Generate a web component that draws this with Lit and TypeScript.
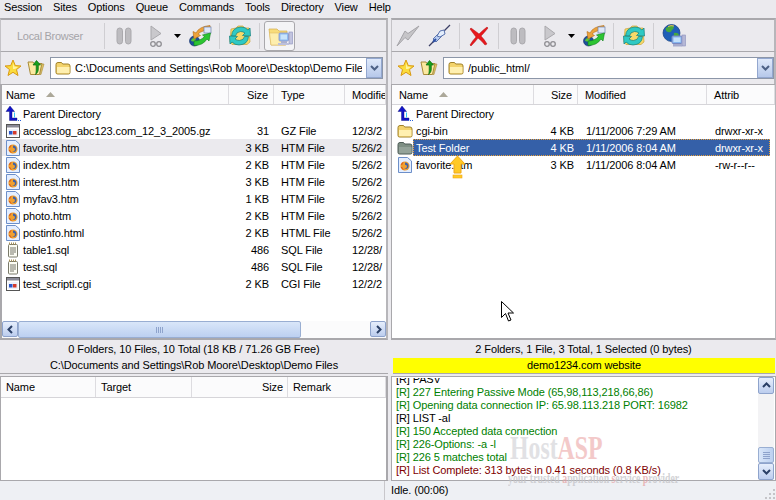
import { LitElement, html, css } from "lit";
import { customElement } from "lit/decorators.js";

const star = () => html`<svg class="ic" width="18" height="18" viewBox="0 0 18 18"><polygon points="9,1 11.3,6.6 17,7 12.5,10.6 14,16.5 9,13.3 4,16.5 5.5,10.6 1,7 6.7,6.6" fill="#fbdc3c" stroke="#d99a12" stroke-width="1"/><polygon points="9,4 10.3,7.6 14,8 11,10 9,10" fill="#fff3a0"/></svg>`;
const folderUp = () => html`<svg class="ic" width="18" height="18" viewBox="0 0 18 18"><path d="M1 3h5l1 1.5h8l-2.500 11H3.500z" fill="#fbe9a0" stroke="#a88b3a"/><path d="M15 5h2l-3 10.500h-1z" fill="#e4c766" stroke="#a88b3a" stroke-width=".6"/><path d="M9.500 1.500l4 4.500h-2.200v4c0 2.500-1 4-2.800 5.500.6-1.500.7-3 .7-5.500V6H6z" fill="#17a11d" stroke="#0b6a10" stroke-width=".7"/></svg>`;
const folder = (grey = false) => html`<svg class="ic" width="16" height="16" viewBox="0 0 16 16"><path d="M1 4.500Q1 2.500 3 2.500h3.500l1.200 1.500H13q2 0 2 2v6.500q0 1.500-1.500 1.500h-11Q1 14 1 12.500z" fill="${grey ? "#7e8f84" : "#f3d36c"}" stroke="${grey ? "#4f5d58" : "#a0812a"}"/><path d="M2 7h12.500v5.500q0 .8-.8.800H2.800q-.8 0-.8-.8z" fill="${grey ? "#94a39a" : "#fff0b0"}"/></svg>`;
const htmIcon = () => html`<svg class="ic" width="16" height="16" viewBox="0 0 16 16"><path d="M1.500.5h9l4 3.500v11.500h-13z" fill="#e4eeff" stroke="#6d8fc9"/><circle cx="8" cy="9" r="4.600" fill="#f0a030"/><path d="M8 5.500a3.500 3.500 0 0 1 3.500 3.500q0 1.500-1.200 2.500-1.500 1-3 .3 2.500 0 2.700-2.300 0-1.500-2-1.800z" fill="#3f62a8"/><path d="M3.700 8Q4.500 5 7 4.700 5.500 6 5.500 7.500z" fill="#d9541a"/><path d="M3.700 10Q5 13 8 13.400 5.500 12 5 10z" fill="#d9541a"/></svg>`;
const winIcon = () => html`<svg class="ic" width="16" height="16" viewBox="0 0 16 16"><rect x="1.500" y="1.500" width="13" height="13" fill="#fff" stroke="#555"/><rect x="2" y="2" width="12" height="2.500" fill="#8a8a96"/><rect x="3" y="6" width="10" height="7" fill="#eef2fb"/><rect x="4" y="8" width="3.500" height="3.500" fill="#2b57c9"/><rect x="8" y="8" width="3.500" height="3.500" fill="#d43a2c"/></svg>`;
const sqlIcon = () => html`<svg class="ic" width="16" height="16" viewBox="0 0 16 16"><rect x="3.500" y="2.500" width="9" height="12.500" rx="1" fill="#fdfdf4" stroke="#7a7a6a"/><path d="M4 1.500h8" stroke="#a8925a" stroke-width="2" stroke-dasharray="1 1"/><path d="M5 6h6M5 8h6M5 10h6M5 12h4" stroke="#77776a"/></svg>`;
const parentIcon = () => html`<svg class="ic parent" width="17" height="16" viewBox="0 0 17 16"><path d="M5 0l4.500 5.500H7V12h5v2.500H4.500V5.500H1z" fill="#1214c8" stroke="#060870" stroke-width=".4"/><path d="M9.500 6.500v5" stroke="#36c7f2" stroke-width="1"/><path d="M11 14.500h1M13 14.500h1M15 14.500h1" stroke="#2a62d8"/></svg>`;
const caret = () => html`<svg class="caret" width="7" height="4" viewBox="0 0 7 4"><path d="M0 0h7L3.500 4z" fill="#000"/></svg>`;
const pause = () => html`<svg class="ic" width="16" height="18" viewBox="0 0 16 18"><rect x="1" y="1" width="5.500" height="16" rx="2.700" fill="#bdbcc0" stroke="#aaa9ad"/><rect x="9.500" y="1" width="5.500" height="16" rx="2.700" fill="#bdbcc0" stroke="#aaa9ad"/></svg>`;
const go = () => html`<svg class="ic" width="14" height="22" viewBox="0 0 14 22"><path d="M2 1l10 7.500L2 15z" fill="#c9c8cc" stroke="#a9a8ac"/><g fill="none" stroke="#8f8e93" stroke-width="1.300"><circle cx="4" cy="19" r="2.300"/><circle cx="10" cy="19" r="2.300"/></g></svg>`;
const sync = () => html`<svg class="ic" width="25" height="24" viewBox="0 0 25 24"><circle cx="6.500" cy="17" r="5" fill="#1c4f9a" stroke="#0f2c66" stroke-width=".6"/><path d="M3 17a3.500 3.500 0 0 1 5-3l-1 4z" fill="#5cc13c"/><path d="M22 1.500Q11 2.500 8 9L5 7.500l1 7.500 6.500-3.500-2.500-1.500Q14 6 22.500 6z" fill="#eda23a" stroke="#b66c13" stroke-width=".6"/><rect x="16" y="3" width="7" height="6" fill="#dfe7f7" stroke="#6d83ad" stroke-width=".7"/><path d="M6 21.500Q15 21.500 19 15l2 2 1.500-8L14.500 11l2 1.500Q12.500 17 6 17z" fill="#2cc432" stroke="#0e7f1a" stroke-width=".6"/></svg>`;
const refresh = () => html`<svg class="ic" width="24" height="24" viewBox="0 0 24 24"><path d="M3 5l5-1 2-2h5l1.500 2H21l1 14-3 2.500H4L2 18z" fill="#f7d969" stroke="#c9a33b" stroke-width=".7"/><path d="M3.500 12Q4 3.500 13 3q4.500 0 7 3l2-2 .5 8-8-.5 2.500-2.500Q15 7.500 12.500 7.500 8 8 7.500 12z" fill="#2ec9c4" stroke="#12807c" stroke-width=".7"/><path d="M20.500 12.500Q20 20.500 11 21q-4.500 0-7-3l-2 2-.5-8 8 .5L7 15q2 1.500 4.500 1.500 4.500-.5 5-4z" fill="#2ec9c4" stroke="#12807c" stroke-width=".7"/></svg>`;
const monitorFolder = () => html`<svg class="ic" width="26" height="24" viewBox="0 0 26 24"><path d="M2 5h8l2 2h8l-1 14H4z" fill="#f8dc7a" stroke="#d3ae52" stroke-width=".7"/><path d="M2.500 9h17l-1 12H4z" fill="#fdeeae" stroke="#e0be66" stroke-width=".6"/><rect x="12" y="9" width="9.500" height="8" rx="1" fill="#8fbdf1" stroke="#8a94c6" stroke-width=".8"/><rect x="13.500" y="10.500" width="6.500" height="5" fill="#c9e4fb"/><rect x="14" y="17" width="6" height="2" fill="#aab0d0"/><rect x="22" y="8" width="3.500" height="12" fill="#c2c4df" stroke="#8a8fbd" stroke-width=".6"/><rect x="11" y="19" width="11" height="2" fill="#bcc0dc"/></svg>`;
const lightning = () => html`<svg class="ic" width="24" height="22" viewBox="0 0 24 22"><path d="M23 1L12 8.500 9 6 1 21 9 12.500 12 15z" fill="#c6c5c8" stroke="#a5a4a8"/></svg>`;
const plug = () => html`<svg class="ic" width="23" height="23" viewBox="0 0 23 23"><path d="M1 22l6-6M16 7l6-6" stroke="#3b3f66" stroke-width="1.300"/><path d="M5 15l7-7 3 3-7 7z" fill="#b9cdf1" stroke="#5a73ad"/><path d="M9 12l3-5 4-1 1 4-5 3z" fill="#e4eefc" stroke="#5a73ad"/><path d="M5 18l3-3" stroke="#2c4ea3" stroke-width="2"/></svg>`;
const redX = () => html`<svg class="ic" width="20" height="20" viewBox="0 0 20 20"><path d="M2 2q7 5 8 6 4-4 8-7l1 1q-4 5-7 8 3 3 6 8l-2 1q-3-4-7-7-3 4-7 8l-1-1q3-5 6-8Q4 7 1 3z" fill="#e8181c" stroke="#b01015" stroke-width=".5"/></svg>`;
const globe = () => html`<svg class="ic" width="24" height="24" viewBox="0 0 24 24"><circle cx="9.500" cy="9" r="8.500" fill="#1e5fb8" stroke="#123d80" stroke-width=".7"/><path d="M4 4q4-3 7-2 2 2-1 4-1 3-4 2-3-1-2-4zM12 9q4-1 5 2-2 4-4 3-2-2-1-5z" fill="#45a83e"/><path d="M6 2.500Q9 1 12 2" stroke="#e8c84a" fill="none"/><rect x="10" y="12" width="10" height="7.500" rx="1" fill="#85b4ef" stroke="#7a88c0"/><rect x="11.500" y="13.500" width="7" height="4.500" fill="#c3e0fa"/><rect x="20" y="11" width="3.500" height="11" fill="#b5b7d6" stroke="#8a8fbd" stroke-width=".6"/><rect x="11" y="20" width="9" height="2.500" fill="#a6aacb"/></svg>`;
const comboArrow = () => html`<svg width="9" height="6" viewBox="0 0 9 6"><path d="M1 1l3.500 3.500L8 1" fill="none" stroke="#4d6185" stroke-width="2"/></svg>`;
const chev = (d: string) => html`<svg width="9" height="9" viewBox="0 0 9 9"><path d="${d}" fill="none" stroke="#2a3f66" stroke-width="2"/></svg>`;
const sortTri = () => html`<svg class="tri" width="9" height="5" viewBox="0 0 9 5"><path d="M4.500 0L9 5H0z" fill="#aca899"/></svg>`;
const gripper = () => html`<svg class="gripper" width="12" height="12" viewBox="0 0 12 12"><path d="M9 1h2v2H9zM9 5h2v2H9zM5 5h2v2H5zM9 9h2v2H9zM5 9h2v2H5zM1 9h2v2H1z" fill="#c4c4c8"/></svg>`;

const leftFiles = [
  ["win", "accesslog_abc123.com_12_3_2005.gz", "31", "GZ File", "12/3/2"],
  ["htm", "favorite.htm", "3 KB", "HTM File", "5/26/2"],
  ["htm", "index.htm", "2 KB", "HTM File", "5/26/2"],
  ["htm", "interest.htm", "3 KB", "HTM File", "5/26/2"],
  ["htm", "myfav3.htm", "1 KB", "HTM File", "5/26/2"],
  ["htm", "photo.htm", "2 KB", "HTM File", "5/26/2"],
  ["htm", "postinfo.html", "2 KB", "HTML File", "5/26/2"],
  ["sql", "table1.sql", "486", "SQL File", "12/28/"],
  ["sql", "test.sql", "486", "SQL File", "12/28/"],
  ["win", "test_scriptl.cgi", "2 KB", "CGI File", "12/2/2"],
];
const iconFor = (k: string) => (k === "htm" ? htmIcon() : k === "win" ? winIcon() : sqlIcon());

const logLines: [string, string][] = [
  ["k", "[R] PASV"],
  ["g", "[R] 227 Entering Passive Mode (65,98,113,218,66,86)"],
  ["g", "[R] Opening data connection IP: 65.98.113.218 PORT: 16982"],
  ["k", "[R] LIST -al"],
  ["g", "[R] 150 Accepted data connection"],
  ["g", "[R] 226-Options: -a -l"],
  ["g", "[R] 226 5 matches total"],
  ["r2", "[R] List Complete: 313 bytes in 0.41 seconds (0.8 KB/s)"],
];

@customElement("app-root")
export class AppRoot extends LitElement {
  static styles = css`
    :host { display: block; width: 776px; height: 500px; overflow: hidden; position: relative; background: #ebeaee; font: 11px/14px "Liberation Sans", Arial, sans-serif; letter-spacing: -0.1px; color: #000; }
    .ic { display: block; flex: none; }
    .menu { height: 18px; display: flex; gap: 11px; padding-left: 4px; align-items: center; box-sizing: border-box; padding-bottom: 4px; letter-spacing: -0.15px; }
    .top { height: 356px; display: flex; gap: 3px; }
    .pane { display: flex; flex-direction: column; box-sizing: border-box; }
    .pane.l { width: 388px; }
    .pane.r { width: 385px; }
    .toolbar { height: 34px; box-sizing: border-box; display: flex; align-items: center; border-top: 2px solid #a9a8ac; border-left: 1px solid #c4c3c7; border-right: 2px solid #b7b6ba; border-bottom: 1px solid #a9a8ac; }
    .sep { width: 1px; height: 26px; background: #cfced2; flex: none; }
    .lb { color: #a5a4a8; width: 103px; padding-left: 16px; box-sizing: border-box; flex: none; letter-spacing: -0.3px; }
    .hot { width: 31px; height: 30px; box-sizing: border-box; display: flex; align-items: center; justify-content: center; background: #f4f4f6; border: 1px solid #a9a8ac; border-radius: 3px; margin-left: 4px; }
    .sp3 { width: 3px; flex: none; } .sp4 { width: 4px; flex: none; } .sp5 { width: 5px; flex: none; } .sp6 { width: 6px; flex: none; } .sp7 { width: 7px; flex: none; } .sp8 { width: 8px; flex: none; } .sp9 { width: 9px; flex: none; } .sp11 { width: 11px; flex: none; } .sp17 { width: 17px; flex: none; }
    .addr { height: 32px; box-sizing: border-box; display: flex; align-items: center; padding-bottom: 1px; border-left: 1px solid #c4c3c7; border-right: 2px solid #b7b6ba; }
    .combo { flex: 1; height: 22px; box-sizing: border-box; background: #fff; border: 1px solid #8c96a8; display: flex; align-items: center; overflow: hidden; padding-left: 4px; gap: 4px; }
    .combo .path { flex: 1; white-space: nowrap; overflow: hidden; min-width: 0; letter-spacing: 0; }
    .drop { width: 16px; height: 20px; flex: none; box-sizing: border-box; display: flex; align-items: center; justify-content: center; background: linear-gradient(#dfe9fa, #b6c8ea); border: 1px solid #93a7cf; }
    .list { flex: 1; background: #fff; display: flex; flex-direction: column; min-height: 0; overflow: hidden; border-left: 2px solid #a9a8ac; border-right: 2px solid #b7b6ba; border-bottom: 2px solid #a9a8ac; box-sizing: border-box; }
    .pane.r .list { border-left-width: 1px; border-right-width: 1px; }
    .head { height: 21px; flex: none; box-sizing: border-box; display: grid; background: #fbfbfc; border-top: 1px solid #a9a8ac; border-bottom: 1px solid #d6d5d9; align-items: center; }
    .head > div { display: flex; align-items: center; height: 100%; box-sizing: border-box; padding-left: 7px; border-right: 1px solid #dddce0; white-space: nowrap; overflow: hidden; }
    .head > div.num { justify-content: flex-end; padding: 0 5px 0 0; }
    .head .tri { margin-left: 11px; }
    .l .head, .l .row { grid-template-columns: 227px 45px 71px 1fr; }
    .r .head, .r .row { grid-template-columns: 142px 44px 129px 1fr; }
    .l .head > div:first-child { padding-left: 4px; }
    .r .head > div:first-child { padding-left: 7px; }
    .rows { flex: 1; min-height: 0; }
    .row { height: 17px; display: grid; align-items: center; white-space: nowrap; }
    .row > div { overflow: hidden; padding-left: 7px; }
    .row > div.num { text-align: right; padding: 0 5px 0 0; }
    .r .row > div.num { padding-right: 4px; }
    .r .row > div { padding-left: 8px; }
    .row > .nm { display: flex; align-items: center; gap: 2px; padding-left: 3px; overflow: visible; }
    .r .row > .nm { padding-left: 5px; gap: 3px; }
    .parent { margin-right: -1px; }
    .row.hl { background: #ebeaee; }
    .r .row.sel { grid-template-columns: 21px 1fr; }
    .r .row.sel > .ico { padding: 0 0 0 5px; overflow: visible; }
    .r .row.sel > .selbar { padding: 0; margin-right: 5px; display: grid; grid-template-columns: 121px 44px 129px 1fr; background: #3560a8; color: #fff; height: 17px; align-items: center; outline: 1px dotted #e8a13c; outline-offset: -1px; }
    .selbar > div { padding-left: 8px; }
    .selbar > div:first-child { padding-left: 3px; }
    .selbar > .num { text-align: right; padding: 0 4px 0 0; }
    .hbar { height: 17px; flex: none; display: flex; background: #fbfbfc; }
    .sbtn { width: 16px; height: 16px; flex: none; box-sizing: border-box; display: flex; align-items: center; justify-content: center; background: linear-gradient(#e6eefc, #bccdee); border: 1px solid #8ea3cc; border-radius: 2px; }
    .thumb { width: 283px; box-sizing: border-box; background: linear-gradient(#d9e6f9, #bcd0f0); border: 1px solid #99aed2; border-radius: 2px; display: flex; align-items: center; justify-content: center; margin-right: auto; }
    .grip { width: 8px; height: 6px; background: repeating-linear-gradient(90deg, #8ea3cc 0 1px, transparent 1px 2px); }
    .st { height: 18px; flex: none; text-align: center; line-height: 18px; white-space: nowrap; }
    .st2 { height: 15px; flex: none; text-align: center; line-height: 15px; border-bottom: 1px solid #a9a8ac; white-space: nowrap; }
    .yl { background: #ffff00; margin: 0 1px 0 2px; }
    .bottom { height: 105px; margin-top: 2px; display: flex; gap: 3px; }
    .queue { width: 388px; box-sizing: border-box; background: #fff; border: 1px solid #a9a8ac; border-right-width: 2px; }
    .queue .head { grid-template-columns: 95px 96px 96px 1fr; border-top: 0; }
    .queue .head > div { padding-left: 5px; }
    .queue .head > div.num { padding: 0 4px 0 0; }
    .log { width: 385px; box-sizing: border-box; background: #fff; border: 1px solid #a9a8ac; display: flex; overflow: hidden; }
    .lines { flex: 1; padding-left: 4px; overflow: hidden; margin-top: 1px; }
    .inner { margin-top: -5px; }
    .inner div { height: 13px; line-height: 13px; white-space: nowrap; }
    .g { color: #008000; } .k { color: #000; } .r2 { color: #800000; }
    .vbar { width: 16px; margin-right: 1px; flex: none; display: flex; flex-direction: column; background: #f3f3f5; }
    .vbar .sbtn { width: 16px; height: 17px; }
    .vthumb { margin-top: auto; height: 16px; width: 16px; box-sizing: border-box; background: linear-gradient(90deg, #d9e6f9, #bcd0f0); border: 1px solid #99aed2; border-radius: 2px; display: flex; align-items: center; justify-content: center; }
    .vthumb .grip2 { width: 7px; height: 7px; background: repeating-linear-gradient(#8ea3cc 0 1px, transparent 1px 2px); }
    .status { height: 19px; display: flex; background: #eef0f4; align-items: flex-end; }
    .status .a { width: 385px; height: 19px; border-right: 1px solid #c8c7cb; flex: none; box-sizing: border-box; }
    .status .b { flex: 1; padding-left: 6px; line-height: 18px; height: 19px; }
    .arrow { position: absolute; left: 449px; top: 155px; }
    .cursor { position: absolute; left: 501px; top: 301px; }
    .wm { position: absolute; left: 510px; top: 429px; pointer-events: none; font-family: "Liberation Serif", serif; font-weight: bold; color: #d8d8dc; opacity: .75; white-space: nowrap; letter-spacing: 0; }
    .wm .big { font-size: 34px; line-height: 38px; transform: scaleX(.7); transform-origin: left; }
    .wm .big span { color: #f0b8b8; }
    .wm .sub { font-size: 14px; line-height: 14px; margin-top: 5px; margin-left: -2px; color: #c4c4c8; transform: scaleX(.7); transform-origin: left; }
    .wm .sub span { color: #e6a6a6; }
  `;

  private head(cols: string[], numIdx: number, sorted: boolean) {
    return html`<div class="head">${cols.map((c, i) => html`<div class="${i === numIdx ? "num" : ""}">${c}${i === 0 && sorted ? sortTri() : ""}</div>`)}</div>`;
  }

  render() {
    return html`
      <div class="menu">${["Session", "Sites", "Options", "Queue", "Commands", "Tools", "Directory", "View", "Help"].map((m) => html`<span>${m}</span>`)}</div>
      <div class="top">
        <div class="pane l">
          <div class="toolbar">
            <div class="lb">Local Browser</div><div class="sep"></div>
            <div class="sp11"></div>${pause()}<div class="sp17"></div>${go()}<div class="sp11"></div>${caret()}<div class="sp7"></div>${sync()}<div class="sp6"></div>
            <div class="sep"></div><div class="sp8"></div>${refresh()}<div class="sp7"></div><div class="sep"></div><div class="hot">${monitorFolder()}</div>
          </div>
          <div class="addr"><div class="sp3"></div>${star()}<div class="sp5"></div>${folderUp()}<div class="sp5"></div>
            <div class="combo">${folder()}<span class="path">C:\\Documents and Settings\\Rob Moore\\Desktop\\Demo Files</span><div class="drop">${comboArrow()}</div></div><div class="sp3"></div></div>
          <div class="list">
            ${this.head(["Name", "Size", "Type", "Modified"], 1, true)}
            <div class="rows">
              <div class="row"><div class="nm">${parentIcon()}<span>Parent Directory</span></div></div>
              ${leftFiles.map((f, i) => html`<div class="row ${i === 1 ? "hl" : ""}"><div class="nm">${iconFor(f[0])}<span>${f[1]}</span></div><div class="num">${f[2]}</div><div>${f[3]}</div><div>${f[4]}</div></div>`)}
            </div>
            <div class="hbar"><div class="sbtn">${chev("M6 1L2.500 4.500 6 8")}</div><div class="thumb"><div class="grip"></div></div><div class="sbtn">${chev("M3 1l3.500 3.500L3 8")}</div></div>
          </div>
          <div class="st">0 Folders, 10 Files, 10 Total (18 KB / 71.26 GB Free)</div>
          <div class="st2">C:\\Documents and Settings\\Rob Moore\\Desktop\\Demo Files</div>
        </div>
        <div class="pane r">
          <div class="toolbar">
            <div class="sp4"></div>${lightning()}<div class="sp8"></div>${plug()}<div class="sp8"></div><div class="sep"></div><div class="sp9"></div>${redX()}<div class="sp9"></div><div class="sep"></div>
            <div class="sp11"></div>${pause()}<div class="sp17"></div>${go()}<div class="sp11"></div>${caret()}<div class="sp7"></div>${sync()}<div class="sp6"></div>
            <div class="sep"></div><div class="sp8"></div>${refresh()}<div class="sp7"></div><div class="sep"></div><div class="sp8"></div>${globe()}
          </div>
          <div class="addr"><div class="sp5"></div>${star()}<div class="sp5"></div>${folderUp()}<div class="sp5"></div>
            <div class="combo">${folder()}<span class="path">/public_html/</span><div class="drop">${comboArrow()}</div></div></div>
          <div class="list">
            ${this.head(["Name", "Size", "Modified", "Attrib"], 1, true)}
            <div class="rows">
              <div class="row"><div class="nm">${parentIcon()}<span>Parent Directory</span></div></div>
              <div class="row"><div class="nm">${folder()}<span>cgi-bin</span></div><div class="num">4 KB</div><div>1/11/2006 7:29 AM</div><div>drwxr-xr-x</div></div>
              <div class="row sel"><div class="ico">${folder(true)}</div><div class="selbar"><div>Test Folder</div><div class="num">4 KB</div><div>1/11/2006 8:04 AM</div><div>drwxr-xr-x</div></div></div>
              <div class="row"><div class="nm">${htmIcon()}<span>favorite.htm</span></div><div class="num">3 KB</div><div>1/11/2006 8:04 AM</div><div>-rw-r--r--</div></div>
            </div>
          </div>
          <div class="st">2 Folders, 1 File, 3 Total, 1 Selected (0 bytes)</div>
          <div class="st2 yl">demo1234.com website</div>
        </div>
      </div>
      <div class="bottom">
        <div class="queue">${this.head(["Name", "Target", "Size", "Remark"], 2, false)}</div>
        <div class="log">
          <div class="lines"><div class="inner">${logLines.map(([c, t]) => html`<div class="${c}">${t}</div>`)}</div></div>
          <div class="vbar"><div class="sbtn">${chev("M1 6l3.500-3.500L8 6")}</div><div class="vthumb"><div class="grip2"></div></div><div class="sbtn">${chev("M1 3l3.500 3.500L8 3")}</div></div>
        </div>
      </div>
      <div class="status"><div class="a"></div><div class="b">Idle. (00:06)</div>${gripper()}</div>
      <svg class="arrow" width="17" height="24" viewBox="0 0 17 24"><path d="M8.500 1L16 9h-4v9H5V9H1z" fill="#ffc926" stroke="#f0a818"/><rect x="4" y="20" width="9" height="3" fill="#ffc926" stroke="#f0a818" stroke-width=".6"/></svg>
      <svg class="cursor" width="13" height="21" viewBox="0 0 13 21"><path d="M.5.5v16l4-4 3 7.500 2.500-1-3-7h5.500z" fill="#fff" stroke="#000"/></svg>
      <div class="wm"><div class="big">Host<span>ASP</span></div><div class="sub">your trusted <span>a</span>pplication <span>s</span>ervice <span>p</span>rovider</div></div>
    `;
  }
}
